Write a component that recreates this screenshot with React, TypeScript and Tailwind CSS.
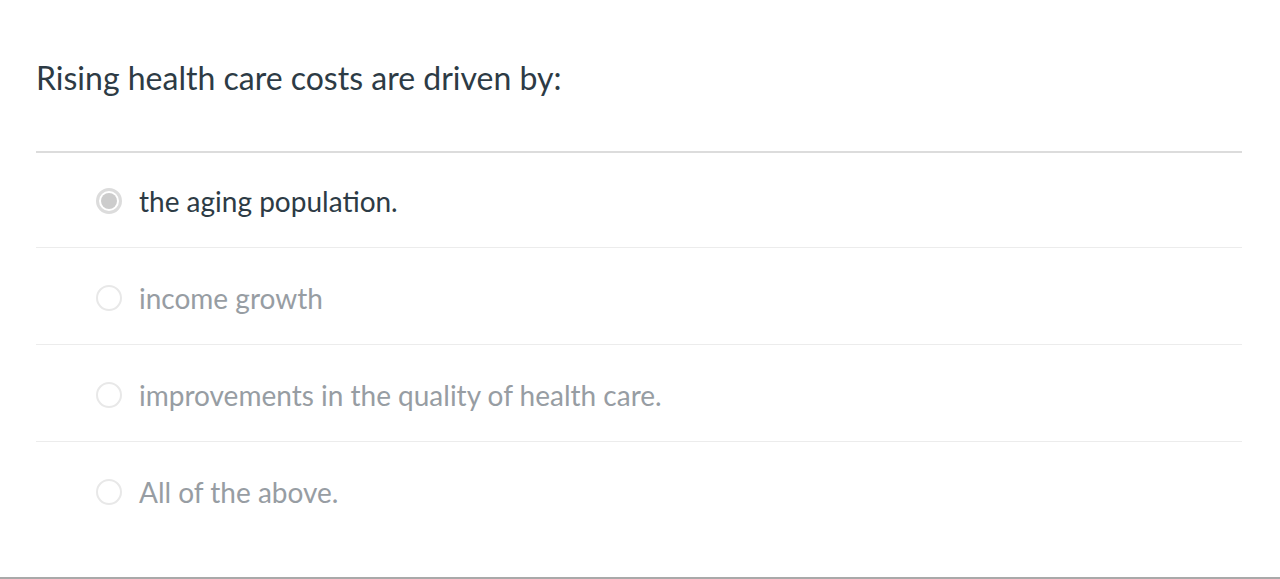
const options = [
  { label: 'the aging population.', selected: true },
  { label: 'income growth', selected: false },
  { label: 'improvements in the quality of health care.', selected: false },
  { label: 'All of the above.', selected: false },
];

function Radio({ selected }: { selected: boolean }) {
  if (selected) {
    return (
      <span className="flex h-[26px] w-[26px] shrink-0 items-center justify-center rounded-full border-[3px] border-[#dcdcdc] bg-white">
        <span className="h-[16px] w-[16px] rounded-full bg-[#cccccc]" />
      </span>
    );
  }
  return <span className="h-[26px] w-[26px] shrink-0 rounded-full border-2 border-[#e8e8e8] bg-white" />;
}

export default function App() {
  return (
    <div className="flex h-[579px] flex-col border-b-2 border-[#a9a9a9] bg-white font-['Lato',sans-serif]">
      <div className="pl-[36px] pr-[38px]">
        <h1 className="flex h-[151px] items-center pt-[4px] text-[32px] text-[#2d3b45]">
          Rising health care costs are driven by:
        </h1>
        <div className="border-t-2 border-[#dcdcdc]">
          {options.map((opt, i) => (
            <div
              key={opt.label}
              className={`flex items-center gap-[17px] pl-[60px] ${i > 0 ? 'h-[97px] border-t border-[#ececec] pt-[4px]' : 'h-[94px] pt-[2px]'}`}
            >
              <Radio selected={opt.selected} />
              <span className={`text-[28px] ${opt.selected ? 'text-[#2d3b45]' : 'text-[#979da3]'}`}>
                {opt.label}
              </span>
            </div>
          ))}
        </div>
      </div>
    </div>
  );
}
